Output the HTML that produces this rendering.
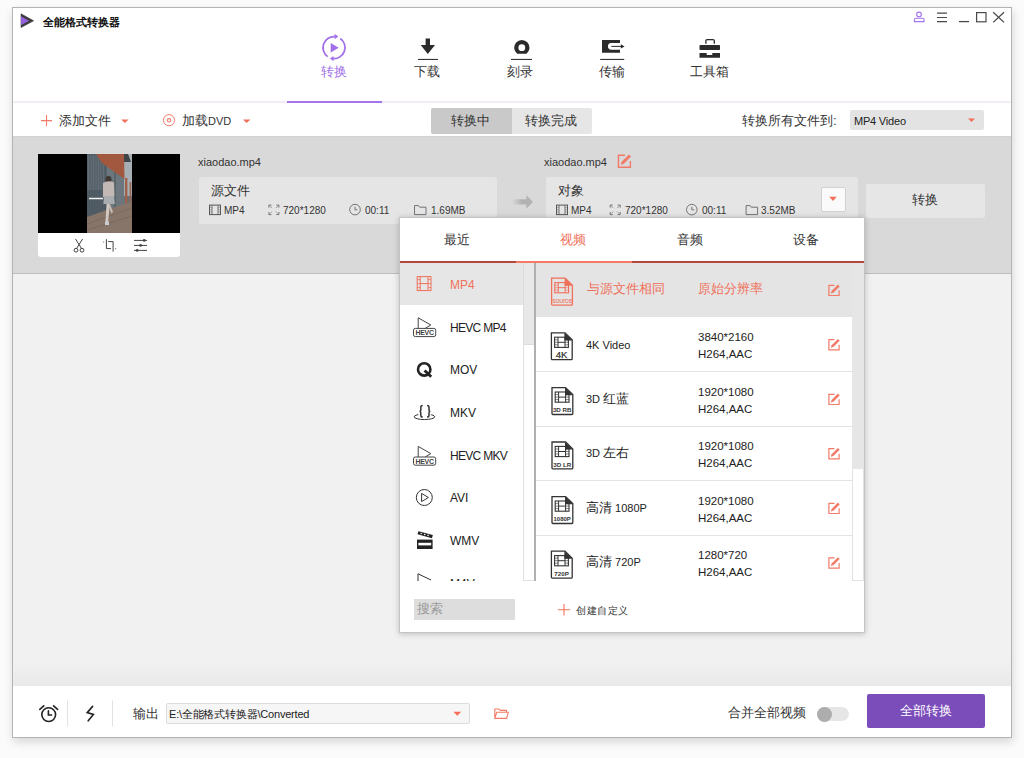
<!DOCTYPE html>
<html><head><meta charset="utf-8">
<style>
html,body{margin:0;padding:0}
body{width:1024px;height:758px;overflow:hidden;position:relative;background:#fbfbfb;font-family:"Liberation Sans",sans-serif;color:#333}
.a{position:absolute}
.t{position:absolute;white-space:nowrap;line-height:20px}
svg{position:absolute;overflow:visible}
</style></head><body>
<!-- window frame -->
<div class="a" style="left:12px;top:7px;width:1000px;height:731px;box-sizing:border-box;border:1px solid #b3b3b3;background:#fff;box-shadow:1px 4px 9px rgba(0,0,0,.15)"></div>
<!-- content gray areas -->
<div class="a" style="left:13px;top:136px;width:998px;height:137px;background:#d9d9d9;border-top:1px solid #d2d2d2;box-sizing:border-box"></div>
<div class="a" style="left:13px;top:273px;width:998px;height:1px;background:#bdbdbd"></div>
<div class="a" style="left:13px;top:274px;width:998px;height:412px;background:linear-gradient(#f1f1f1 0,#f1f1f1 388px,#e9e9e9 412px)"></div>
<!-- nav line -->
<div class="a" style="left:13px;top:101px;width:998px;height:2px;background:#f1ecf8"></div>
<div class="a" style="left:287px;top:101px;width:95px;height:2px;background:#a374ec"></div>

<!-- title bar -->
<svg style="left:0;top:0" width="1024" height="40">
 <path d="M21 13.8 L33.6 20.8 L21 27.6 Z" fill="#3a3a3a" stroke="#3a3a3a" stroke-width="0.6" stroke-linejoin="round"/>
 <path d="M21 16.2 L29.2 20.8 L21 25.3 Z" fill="#9461dc"/>
 <circle cx="919" cy="14.4" r="2.3" fill="none" stroke="#a374ec" stroke-width="1.1"/>
 <path d="M914.4 21.6 v-2.2 a1.2 1.2 0 0 1 1.2 -1.2 h7.2 a1.2 1.2 0 0 1 1.2 1.2 v2.2 z" fill="none" stroke="#a374ec" stroke-width="1.1"/>
 <path d="M937 13.2 h10 M937 17.5 h10 M937 21.6 h10" stroke="#4a4a4a" stroke-width="1.2"/>
 <path d="M959 21.6 h10" stroke="#4a4a4a" stroke-width="1.3"/>
 <rect x="976.6" y="12.6" width="9.4" height="9.2" fill="none" stroke="#4a4a4a" stroke-width="1.2"/>
 <path d="M993.2 12.2 L1004 22.4 M1004 12.2 L993.2 22.4" stroke="#4a4a4a" stroke-width="1.3"/>
</svg>
<div class="t" style="left:43px;top:12px;font-size:11px;font-weight:bold;color:#111">全能格式转换器</div>

<!-- nav -->
<svg style="left:0;top:0" width="1024" height="100">
 <g fill="none" stroke="#a06fe9" stroke-width="1.75">
  <path d="M327.69 56.61 A11 11 0 0 1 334.6 36.61"/>
  <path d="M340.31 38.59 A11 11 0 0 1 333.04 58.56"/>
 </g>
 <path d="M334.5 34 L338.4 36.6 L334.5 39.3 Z" fill="#a06fe9"/>
 <path d="M333.5 55.9 L330 58.56 L333.5 61.2 Z" fill="#a06fe9"/>
 <path d="M330.7 43 L338.7 47.8 L330.7 52.5 Z" fill="#a06fe9"/>
 <!-- download -->
 <path d="M425.6 38.6 h4.4 v6.4 h5 L427.8 54 L420.7 45 h4.9 z" fill="#2b2b2b"/>
 <rect x="418" y="58.9" width="20" height="1.1" fill="#333"/>
 <!-- burn -->
 <path d="M517.2 53.8 A7.7 7.7 0 1 1 526.5 53.8 Z" fill="#2b2b2b"/><circle cx="521.8" cy="47.7" r="3.4" fill="#fff"/>
 <rect x="511" y="58.9" width="21" height="1.1" fill="#333"/>
 <!-- transfer -->
 <path d="M602 40 h18 v2.9 h-8.6 a3.45 3.45 0 0 0 0 6.9 h8.6 v3 h-18 z" fill="#2b2b2b"/>
 <path d="M611.3 46.4 h10" stroke="#2b2b2b" stroke-width="1"/>
 <path d="M620.8 44.3 L624.6 46.4 L620.8 48.6 Z" fill="#2b2b2b"/>
 <rect x="600.2" y="58.9" width="24" height="1.1" fill="#333"/>
 <!-- toolbox -->
 <path d="M705.9 43.8 v-3 a1.2 1.2 0 0 1 1.2 -1.2 h6 a1.2 1.2 0 0 1 1.2 1.2 v3" fill="none" stroke="#2b2b2b" stroke-width="1.3"/>
 <rect x="699.5" y="45.1" width="20.5" height="4.9" rx="0.8" fill="#2b2b2b"/>
 <path d="M699.5 53 h7.2 v2 h5.6 v-2 h7.7 v4.7 h-20.5 z" fill="#2b2b2b"/>
</svg>
<div class="t" style="left:321px;top:62px;font-size:13px;color:#a06fe9">转换</div>
<div class="t" style="left:414px;top:62px;font-size:13px;color:#333">下载</div>
<div class="t" style="left:507px;top:62px;font-size:13px;color:#333">刻录</div>
<div class="t" style="left:599px;top:62px;font-size:13px;color:#333">传输</div>
<div class="t" style="left:690px;top:62px;font-size:13px;color:#333">工具箱</div>

<!-- toolbar -->
<svg style="left:0;top:100px" width="1024" height="40">
 <path d="M41 20.6 h11 M46.5 15 v11.2" stroke="#f27a66" stroke-width="1.1"/>
 <path d="M121.2 19.4 h7.4 l-3.7 3.6 z" fill="#f0705a"/>
 <circle cx="169" cy="20.2" r="5.6" fill="none" stroke="#f4806e" stroke-width="1"/>
 <circle cx="169" cy="20.3" r="1.7" fill="none" stroke="#f4806e" stroke-width="1.1"/>
 <path d="M243 19.4 h7.4 l-3.7 3.6 z" fill="#f0705a"/>
</svg>
<div class="t" style="left:59px;top:111px;font-size:13px;color:#333">添加文件</div>
<div class="t" style="left:182px;top:111px;font-size:13px;color:#333">加载<span style="font-size:11px">DVD</span></div>
<div class="a" style="left:431px;top:108px;width:161px;height:26px;border-radius:2px;background:#e6e6e6"></div>
<div class="a" style="left:431px;top:108px;width:81px;height:26px;border-radius:2px 0 0 2px;background:#c9c9c9"></div>
<div class="t" style="left:451px;top:111px;font-size:13px;color:#333">转换中</div>
<div class="t" style="left:525px;top:111px;font-size:13px;color:#333">转换完成</div>
<div class="t" style="left:742px;top:111px;font-size:13px;color:#333">转换所有文件到:</div>
<div class="a" style="left:850px;top:110px;width:134px;height:20px;border-radius:2px;background:#e3e3e3"></div>
<div class="t" style="left:854px;top:111px;font-size:11px;letter-spacing:-0.2px;color:#222">MP4 Video</div>
<svg style="left:0;top:100px" width="1024" height="40"><path d="M968 18.4 h7 l-3.5 3.5 z" fill="#f36e58"/></svg>

<!-- ITEM ROW -->
<div class="a" style="left:38px;top:154px;width:142px;height:103px;border-radius:0 0 3px 3px;background:#fff;overflow:hidden">
 <div class="a" style="left:0;top:0;width:142px;height:79px;background:#000"></div>
 <svg style="left:49px;top:0" width="45" height="79" viewBox="0 0 45 79">
  <rect width="45" height="79" fill="#66727a"/>
  <path d="M0 0 H20 V58 L0 64 Z" fill="#56626b"/>
  <path d="M1.5 2 v60 M4 2 v59 M6.5 2 v59 M9 2 v58 M11.5 2 v57 M14 2 v57 M16.5 2 v56" stroke="#68747b" stroke-width="0.7"/>
  <path d="M0 36 H19 V58 L0 64 Z" fill="#48535b" opacity="0.6"/>
  <path d="M37 0 H45 V42 H37 Z" fill="#a7afb4"/>
  <path d="M37 0 H41 L44 8 H37 Z" fill="#3e4448"/>
  <path d="M19 8 H37 V56 H19 Z" fill="#6b777d"/>
  <path d="M19 8 v50 M28 12 v46" stroke="#4a555c" stroke-width="1"/>
  <path d="M9 0 H37 L37.5 25 L15 9 Z" fill="#a2573f"/>
  <path d="M38 24 h2.4 v25 h-2.4 z" fill="#a0604a"/>
  <path d="M42.6 28 h1.6 v20 h-1.6 z" fill="#9a6452"/>
  <path d="M0 63 L45 47 V79 H0 Z" fill="#88756a"/>
  <path d="M0 70 L45 54 M0 76 L45 62" stroke="#74614f" stroke-width="0.6"/>
  <ellipse cx="21.5" cy="25.5" rx="3" ry="3.4" fill="#3f3734"/>
  <path d="M16 29 q5 -3 11 -0.5 l0.5 14 q-6 2.5 -11.5 0.5 z" fill="#c3b9b4"/>
  <path d="M17 42 h10 l0.8 8 h-11.4 z" fill="#a9adb0"/>
  <path d="M19.6 50 l-1.2 19 h2.6 l1.8 -19 z" fill="#d2c8c2"/>
  <path d="M23 50 l3 8 l-1.6 1.4 l-2.6 -7 z" fill="#c6bcb6"/>
  <rect x="18" y="67.5" width="4" height="3.5" fill="#c9ccd0"/>
  <path d="M2 44.5 h14" stroke="#f0f0f0" stroke-width="1.4"/>
 </svg>
</div>
<svg style="left:0;top:230px" width="200" height="30">
 <g fill="none" stroke="#444" stroke-width="1">
  <path d="M75.5 9 L81.5 18.4 M82.6 9 L76.6 18.4"/>
  <circle cx="76" cy="20.2" r="1.9"/><circle cx="82" cy="20.2" r="1.9"/>
  <path d="M106.4 9.2 v9.4 h4.6 M108.2 11.6 h4.9 v10"/>
  <path d="M134 10.4 h13 M134 15.4 h13 M134 20.4 h13"/>
 </g>
 <rect x="103" y="11.4" width="1.2" height="1.2" fill="#999"/><rect x="115" y="18" width="1.2" height="1.2" fill="#888"/><circle cx="144.2" cy="10.4" r="1.3" fill="#444"/><circle cx="140.6" cy="15.4" r="1.3" fill="#444"/><circle cx="137.2" cy="20.4" r="1.3" fill="#444"/>
</svg>

<div class="t" style="left:198px;top:152px;font-size:11px;color:#333">xiaodao.mp4</div>
<div class="a" style="left:199px;top:177px;width:298px;height:47px;border-radius:2px;background:#e5e5e5"></div>
<div class="t" style="left:211px;top:181px;font-size:13px;color:#333">源文件</div>
<div class="t" style="left:224px;top:201px;font-size:10px;color:#333">MP4</div>
<div class="t" style="left:283px;top:201px;font-size:10px;color:#333">720*1280</div>
<div class="t" style="left:365px;top:201px;font-size:10px;color:#333">00:11</div>
<div class="t" style="left:431px;top:201px;font-size:10px;color:#333">1.69MB</div>

<svg style="left:0;top:0" width="1024" height="260">
 <defs>
  <g id="film"><rect x="0.5" y="0.5" width="11" height="9.5" fill="none" stroke="#555" stroke-width="1"/><path d="M3 0.5 v9.5 M9 0.5 v9.5" stroke="#555" stroke-width="0.8"/><path d="M0.5 3 h2.5 M0.5 5.2 h2.5 M0.5 7.4 h2.5 M9 3 h2.5 M9 5.2 h2.5 M9 7.4 h2.5" stroke="#777" stroke-width="0.6"/></g>
  <g id="exp" fill="none" stroke="#666" stroke-width="0.9"><path d="M0.5 3 v-2.5 h2.5 M8 0.5 h2.5 v2.5 M10.5 7.5 v2.5 h-2.5 M3 10 h-2.5 v-2.5"/><path d="M1.5 1.5 l2 2 M9.5 1.5 l-2 2 M9.5 9 l-2 -2 M1.5 9 l2 -2" stroke-width="0.6"/></g>
  <g id="clk" fill="none" stroke="#666" stroke-width="0.9"><circle cx="5.8" cy="5.6" r="5.3"/><path d="M5.8 2.8 v3 h2.4"/></g>
  <g id="fld" fill="none" stroke="#666" stroke-width="0.9"><path d="M0.5 1 h4 l1.2 1.6 h6.3 v7.4 h-11.5 z"/></g>
  <g id="edit"><path d="M6.5 0.9 h-5.6 v10.2 h10.2 v-5.2" fill="none" stroke="#f27a68" stroke-width="1.2"/><path d="M2.8 9 L3.6 6.5 L9.9 0.2 L11.7 2 L5.4 8.3 Z" fill="#f27a68"/></g>
 </defs>
 <use href="#film" x="209" y="204.6"/>
 <use href="#exp" x="268.4" y="204.6"/>
 <use href="#clk" x="349.2" y="204"/>
 <use href="#fld" x="414" y="204.6"/>
</svg>

<!-- arrow -->
<svg style="left:0;top:0" width="1024" height="260">
 <defs><linearGradient id="ag" gradientUnits="userSpaceOnUse" x1="512" y1="0" x2="522" y2="0"><stop offset="0" stop-color="#b2b2b2" stop-opacity="0"/><stop offset="1" stop-color="#b2b2b2"/></linearGradient></defs>
 <path d="M512.6 199.2 h13.8 v-4 l6.5 6.8 l-6.5 6.8 v-4.2 h-13.8 z" fill="url(#ag)"/>
</svg>

<div class="t" style="left:544px;top:152px;font-size:11px;color:#333">xiaodao.mp4</div>
<svg style="left:0;top:0" width="1024" height="260">
 <use href="#edit" transform="translate(617.4 154.2) scale(1.17)"/>
</svg>
<div class="a" style="left:546px;top:177px;width:312px;height:47px;border-radius:2px;background:#e5e5e5"></div>
<div class="t" style="left:558px;top:181px;font-size:13px;color:#333">对象</div>
<div class="t" style="left:571px;top:201px;font-size:10px;color:#333">MP4</div>
<div class="t" style="left:625px;top:201px;font-size:10px;color:#333">720*1280</div>
<div class="t" style="left:702px;top:201px;font-size:10px;color:#333">00:11</div>
<div class="t" style="left:761px;top:201px;font-size:10px;color:#333">3.52MB</div>
<svg style="left:0;top:0" width="1024" height="260">
 <use href="#film" x="556" y="204.6"/>
 <use href="#exp" x="609.7" y="204.6"/>
 <use href="#clk" x="686" y="204"/>
 <use href="#fld" x="745.6" y="204.6"/>
</svg>
<div class="a" style="left:821px;top:187px;width:25px;height:25px;box-sizing:border-box;border:1px solid #d2d2d2;border-radius:2px;background:#fafafa"></div>
<svg style="left:0;top:0" width="1024" height="260"><path d="M829.2 196.8 h7.6 l-3.8 4.2 z" fill="#f0705a"/></svg>
<div class="a" style="left:866px;top:184px;width:119px;height:34px;border-radius:2px;background:#e6e6e6"></div>
<div class="t" style="left:912px;top:190px;font-size:13px;color:#333">转换</div>

<!-- POPUP -->
<div class="a" style="left:399px;top:217px;width:466px;height:416px;box-sizing:border-box;border:1px solid #c4c4c4;background:#fff;box-shadow:0 1px 6px rgba(0,0,0,.22)"></div>
<div class="t" style="left:444px;top:230px;font-size:13px;color:#333">最近</div>
<div class="t" style="left:560px;top:230px;font-size:13px;color:#f0705a">视频</div>
<div class="t" style="left:677px;top:230px;font-size:13px;color:#333">音频</div>
<div class="t" style="left:793px;top:230px;font-size:13px;color:#333">设备</div>
<div class="a" style="left:400px;top:261px;width:464px;height:2px;background:#b4493b"></div>
<div class="a" style="left:516px;top:261px;width:116px;height:2px;background:#f47a62"></div>

<!-- left list -->
<div class="a" style="left:400px;top:263px;width:123px;height:42px;background:#e6e6e6"></div>
<div class="a" style="left:523px;top:263px;width:11px;height:318px;box-sizing:border-box;border:1px solid #e0e0e0;border-top:0;border-right:0;background:#fff"></div>
<div class="a" style="left:523px;top:263px;width:11px;height:82px;box-sizing:border-box;border-left:1px solid #dcdcdc;border-bottom:1px solid #dcdcdc;background:#e8e8e8"></div>
<div class="a" style="left:534px;top:263px;width:2px;height:318px;background:#b0b0b0"></div>
<div class="t" style="left:450px;top:275px;font-size:12px;color:#f0705a">MP4</div>
<div class="t" style="left:450px;top:318px;font-size:12px;letter-spacing:-0.7px;color:#222">HEVC MP4</div>
<div class="t" style="left:450px;top:360px;font-size:12px;color:#222">MOV</div>
<div class="t" style="left:450px;top:403px;font-size:12px;color:#222">MKV</div>
<div class="t" style="left:450px;top:446px;font-size:12px;letter-spacing:-0.7px;color:#222">HEVC MKV</div>
<div class="t" style="left:450px;top:488px;font-size:12px;color:#222">AVI</div>
<div class="t" style="left:450px;top:531px;font-size:12px;color:#222">WMV</div>
<div class="a" style="left:400px;top:563px;width:123px;height:18px;overflow:hidden"><div class="t" style="left:50px;top:11px;font-size:12px;color:#222">M4V</div></div>

<svg style="left:0;top:0" width="1024" height="700">
 <defs>
  <g id="hevc"><path d="M5.2 11 V0.4 L17.8 7.6 L12.2 11" fill="none" stroke="#444" stroke-width="1"/><rect x="0.5" y="11" width="22.2" height="8.2" rx="1.8" fill="#fff" stroke="#444" stroke-width="1"/><text x="11.6" y="17.6" font-family="Liberation Sans" font-size="7" font-weight="bold" text-anchor="middle" fill="#444" letter-spacing="-0.3">HEVC</text></g>
 </defs>
 <!-- mp4 film -->
 <g fill="none" stroke="#f0705a" stroke-width="1"><rect x="417.2" y="276.6" width="13.8" height="14"/><path d="M420.2 276.6 v14 M428 276.6 v14 M420.2 283.6 h7.8"/><path d="M417.2 279.6 h3 M417.2 283.6 h3 M417.2 287.6 h3 M428 279.6 h3 M428 283.6 h3 M428 287.6 h3" stroke-width="0.8"/></g>
 <use href="#hevc" x="413" y="317.4"/>
 <!-- MOV Q -->
 <circle cx="424.2" cy="369.4" r="6.2" fill="none" stroke="#222" stroke-width="2.6"/>
 <path d="M424.6 370.4 L431.2 376.8" stroke="#222" stroke-width="2.8"/>
 <!-- MKV -->
 <ellipse cx="424.45" cy="416.8" rx="10.3" ry="2.75" fill="none" stroke="#333" stroke-width="1"/>
 <rect x="418.4" y="412" width="12.4" height="3.8" fill="#fff"/>
 <path d="M422.7 405.6 q-1.9 0 -1.9 1.8 v2.5 q0 1.2 -1.2 1.4 q1.2 0.2 1.2 1.4 v2.5 q0 1.8 1.9 1.8 M427.1 405.6 q1.9 0 1.9 1.8 v2.5 q0 1.2 1.2 1.4 q-1.2 0.2 -1.2 1.4 v2.5 q0 1.8 -1.9 1.8" fill="none" stroke="#333" stroke-width="1.5"/>
 <use href="#hevc" x="413" y="446"/>
 <!-- AVI -->
 <circle cx="424.3" cy="497.5" r="8" fill="none" stroke="#333" stroke-width="1"/>
 <path d="M421.6 493.4 L428.4 497.5 L421.6 501.6 Z" fill="none" stroke="#333" stroke-width="1"/>
 <!-- WMV clapper -->
 <rect x="417" y="539.6" width="15.6" height="9.4" fill="#222"/>
 <rect x="418.4" y="542.8" width="12.8" height="2.6" fill="#fff"/>
 <path d="M418 532.8 L432.4 536.6" stroke="#222" stroke-width="3.2"/>
 <path d="M420.6 533.4 l1.3 0.35 M424 534.3 l1.3 0.35 M427.4 535.2 l1.3 0.35" stroke="#fff" stroke-width="1.2"/>
 <!-- M4V partial -->
 <path d="M418 573.8 L431 580" stroke="#333" stroke-width="1"/>
 <path d="M418 573.8 V581" stroke="#333" stroke-width="1"/>
</svg>

<!-- right list -->
<div class="a" style="left:536px;top:263px;width:316px;height:54px;background:#e4e4e4"></div>
<div class="a" style="left:536px;top:371px;width:316px;height:1px;background:#e3e3e3"></div>
<div class="a" style="left:536px;top:426px;width:316px;height:1px;background:#e3e3e3"></div>
<div class="a" style="left:536px;top:480px;width:316px;height:1px;background:#e3e3e3"></div>
<div class="a" style="left:536px;top:535px;width:316px;height:1px;background:#e3e3e3"></div>
<div class="a" style="left:852px;top:263px;width:12px;height:318px;box-sizing:border-box;border:1px solid #e2e2e2;border-top:0;background:#fff"></div>
<div class="a" style="left:852px;top:263px;width:12px;height:206px;background:#e6e6e6"></div>

<div class="t" style="left:587px;top:279px;font-size:13px;color:#f0705a">与源文件相同</div>
<div class="t" style="left:698px;top:279px;font-size:13px;color:#f0705a">原始分辨率</div>
<div class="t" style="left:586px;top:335px;font-size:11px;color:#222">4K Video</div>
<div class="t" style="left:586px;top:389px;font-size:11px;color:#222">3D <span style="font-size:13px">红蓝</span></div>
<div class="t" style="left:586px;top:443px;font-size:11px;color:#222">3D <span style="font-size:13px">左右</span></div>
<div class="t" style="left:586px;top:498px;font-size:11px;color:#222"><span style="font-size:13px">高清</span> 1080P</div>
<div class="t" style="left:586px;top:552px;font-size:11px;color:#222"><span style="font-size:13px">高清</span> 720P</div>
<div class="t" style="left:698px;top:329px;font-size:11.5px;line-height:17px;color:#222">3840*2160<br>H264,AAC</div>
<div class="t" style="left:698px;top:384px;font-size:11.5px;line-height:17px;color:#222">1920*1080<br>H264,AAC</div>
<div class="t" style="left:698px;top:438px;font-size:11.5px;line-height:17px;color:#222">1920*1080<br>H264,AAC</div>
<div class="t" style="left:698px;top:493px;font-size:11.5px;line-height:17px;color:#222">1920*1080<br>H264,AAC</div>
<div class="a" style="left:536px;top:536px;width:316px;height:45px;overflow:hidden"><div class="t" style="left:162px;top:11px;font-size:11.5px;line-height:17px;color:#222">1280*720<br>H264,AAC</div></div>

<svg style="left:0;top:0" width="1024" height="700">
 <defs>
  <g id="doc">
   <path d="M1 0.8 h13.6 l7.2 7 v19 a0.9 0.9 0 0 1 -0.9 0.9 h-19 a0.9 0.9 0 0 1 -0.9 -0.9 z" fill="none" stroke="currentColor" stroke-width="1.3"/>
   <path d="M14 0.8 L21.8 8.4 H14 Z" fill="currentColor"/>
   <rect x="4.2" y="5.2" width="13.8" height="10.2" fill="none" stroke="currentColor" stroke-width="1.1"/>
   <path d="M7.6 5.2 v10.2 M14.6 5.2 v10.2 M7.6 10.3 h7" stroke="currentColor" stroke-width="1"/>
   <path d="M4.2 7.8 h3.4 M4.2 10.3 h3.4 M4.2 12.8 h3.4 M14.6 7.8 h3.4 M14.6 10.3 h3.4 M14.6 12.8 h3.4" stroke="currentColor" stroke-width="0.6"/>
  </g>
 </defs>
 <g style="color:#f0705a"><use href="#doc" x="550.6" y="277.4"/><text x="562.2" y="303.4" font-family="Liberation Sans" font-size="7" text-anchor="middle" fill="#f0705a" letter-spacing="-0.2">source</text></g>
 <g style="color:#333">
  <use href="#doc" x="550.4" y="332"/><text x="561.6" y="357.8" font-family="Liberation Sans" font-size="9.6" text-anchor="middle" fill="#333" stroke="#333" stroke-width="0.25">4K</text>
  <use href="#doc" x="551" y="386.8"/><text x="562.2" y="412.2" font-family="Liberation Sans" font-size="6.2" font-weight="bold" text-anchor="middle" fill="#333">3D RB</text>
  <use href="#doc" x="551" y="441.2"/><text x="562.2" y="466.6" font-family="Liberation Sans" font-size="6.2" font-weight="bold" text-anchor="middle" fill="#333">3D LR</text>
  <use href="#doc" x="551" y="495.8"/><text x="562.2" y="521.2" font-family="Liberation Sans" font-size="6" font-weight="bold" text-anchor="middle" fill="#333">1080P</text>
  <use href="#doc" x="550.4" y="550.4"/><text x="561.6" y="575.8" font-family="Liberation Sans" font-size="6.2" font-weight="bold" text-anchor="middle" fill="#333">720P</text>
 </g>
 <use href="#edit" x="828" y="284.4"/>
 <use href="#edit" x="828" y="338.8"/>
 <use href="#edit" x="828" y="393.4"/>
 <use href="#edit" x="828" y="447.8"/>
 <use href="#edit" x="828" y="502.4"/>
 <use href="#edit" x="828" y="557"/>
</svg>
<div class="a" style="left:536px;top:581px;width:328px;height:50px;background:#fff"></div>

<!-- footer -->
<div class="a" style="left:414px;top:599px;width:101px;height:21px;background:#dddddd"></div>
<div class="t" style="left:417px;top:599px;font-size:12.5px;color:#999">搜索</div>
<svg style="left:0;top:0" width="1024" height="700"><path d="M558 609.8 h12 M564 604 v11.6" stroke="#f0705a" stroke-width="1.1"/></svg>
<div class="t" style="left:576px;top:601px;font-size:10px;letter-spacing:0.5px;color:#333">创建自定义</div>

<!-- BOTTOM BAR -->
<svg style="left:0;top:690px" width="1024" height="50">
 <g fill="none" stroke="#222" stroke-width="1.6" stroke-linecap="round">
  <circle cx="48.7" cy="24.6" r="6.9"/>
  <path d="M48.4 20.8 v4.2 h3.2"/>
  <path d="M39.8 19.4 L43.8 15.8 M53.6 15.8 L57.6 19.4"/>
  <path d="M92.6 16.4 L87.2 22.6 L93.4 24.4 L88.2 30.8"/>
 </g>
 <path d="M67.5 10.5 v26 M112.5 10.5 v26" stroke="#e2e2e2" stroke-width="1"/>
 <path d="M494.8 28.4 V19 h4.2 l1.3 1.4 h6.2 v1.8 M494.8 28.4 L496.8 22.2 H508.4 L506.6 28.4 Z" fill="none" stroke="#f47a66" stroke-width="1.1" stroke-linejoin="round"/>
</svg>
<div class="t" style="left:133px;top:704px;font-size:13px;color:#333">输出</div>
<div class="a" style="left:166px;top:703px;width:304px;height:21px;box-sizing:border-box;border:1px solid #dcdcdc;border-radius:2px;background:#f6f6f6"></div>
<svg style="left:0;top:690px" width="1024" height="50"><path d="M453.4 21.8 h7.8 l-3.9 4 z" fill="#f36e58"/></svg>
<div class="t" style="left:169px;top:704px;font-size:11px;letter-spacing:-0.2px;color:#222">E:\全能格式转换器\Converted</div>
<div class="t" style="left:728px;top:703px;font-size:13px;color:#333">合并全部视频</div>
<div class="a" style="left:817px;top:707px;width:32px;height:14px;border-radius:7px;background:#e6e6e6"></div>
<div class="a" style="left:817px;top:706.5px;width:15px;height:15px;border-radius:50%;background:#adadad"></div>
<div class="a" style="left:867px;top:694px;width:118px;height:34px;border-radius:2px;background:#7b4dbb"></div>
<div class="t" style="left:900px;top:701px;font-size:13px;color:#fff">全部转换</div>

</body></html>
